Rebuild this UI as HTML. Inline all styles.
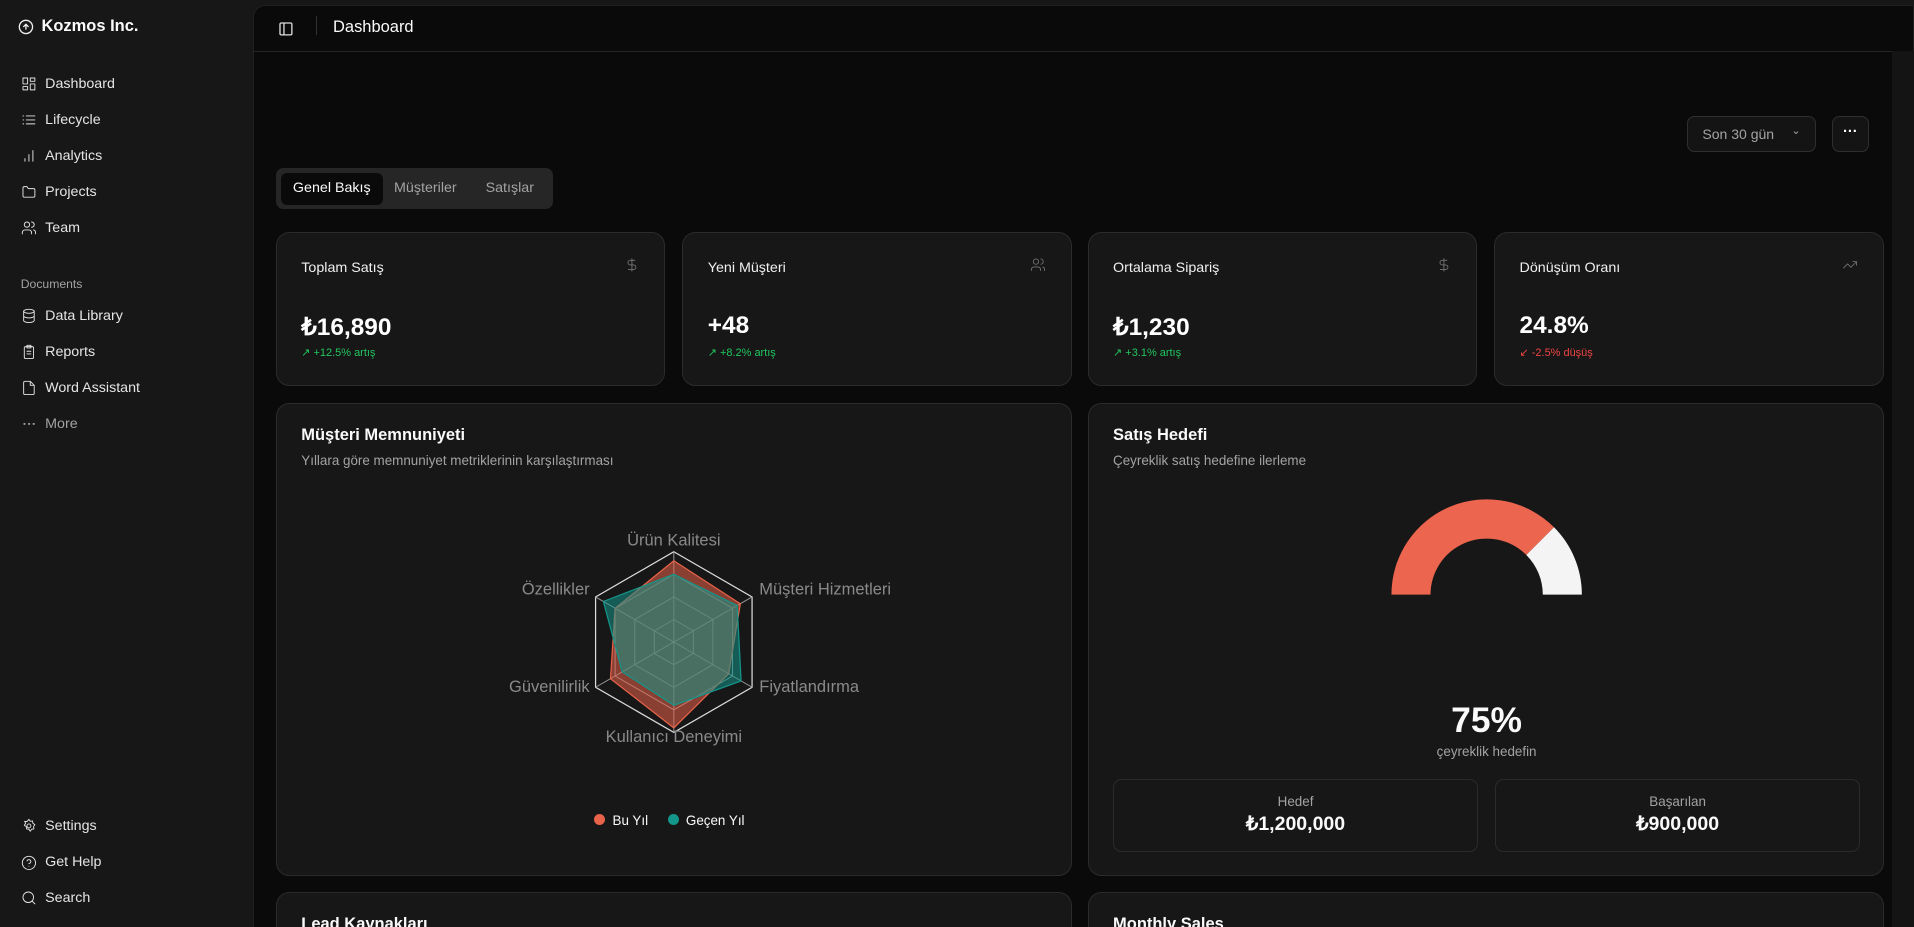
<!DOCTYPE html>
<html style="background:#171717;overflow:hidden"><head><meta charset="utf-8"><style>
html{zoom:1.2207}
*{box-sizing:border-box;margin:0;padding:0}
body{width:1568px;height:759px;overflow:hidden;background:#171717;font-family:"Liberation Sans",sans-serif;color:#fafafa;position:relative}
.a{position:absolute}
.nav{position:absolute;left:17px;font-size:11.7px;color:#e5e5e5;display:flex;align-items:center;gap:7px}
.nav svg{width:13px;height:13px;stroke:#e5e5e5;fill:none;stroke-width:1.4;stroke-linecap:round;stroke-linejoin:round}
.main{position:absolute;left:207px;top:4px;width:1361px;height:755px;background:#0a0a0a;border-top-left-radius:10px;border:1px solid #202020;border-bottom:none}
.card{position:absolute;background:#171717;border:1px solid #2b2b2b;border-radius:11px}
.t{font-size:11.7px;color:#f0f0f0}
.v{font-size:20px;font-weight:bold;color:#fff}
.s{font-size:9px}
.ic{position:absolute;right:20px;top:20px;width:13px;height:13px;stroke:#777;fill:none;stroke-width:1.3}
</style></head><body>
<div class="a" style="left:15px;top:14px;display:flex;align-items:center;gap:6px;font-size:13.5px;font-weight:bold">
<svg width="13" height="13" viewBox="0 0 24 24" fill="none" stroke="#eee" stroke-width="2"><circle cx="12" cy="12" r="10"/><path d="M12 16V8M8 12l4-4 4 4"/></svg>Kozmos Inc.</div>
<div class="nav" style="top:62px"><svg viewBox="0 0 24 24"><rect x="3" y="3" width="7" height="9"/><rect x="14" y="3" width="7" height="5"/><rect x="14" y="12" width="7" height="9"/><rect x="3" y="16" width="7" height="5"/></svg>Dashboard</div>
<div class="nav" style="top:92px"><svg viewBox="0 0 24 24"><path d="M8 6h13M8 12h13M8 18h13M3 6h1M3 12h1M3 18h1"/></svg>Lifecycle</div>
<div class="nav" style="top:121px"><svg viewBox="0 0 24 24"><path d="M6 20v-4M12 20V10M18 20V4"/></svg>Analytics</div>
<div class="nav" style="top:151px"><svg viewBox="0 0 24 24"><path d="M3 6a2 2 0 012-2h4l2 3h8a2 2 0 012 2v9a2 2 0 01-2 2H5a2 2 0 01-2-2z"/></svg>Projects</div>
<div class="nav" style="top:180px"><svg viewBox="0 0 24 24"><circle cx="9" cy="7" r="4"/><path d="M2 21v-2a4 4 0 014-4h6a4 4 0 014 4v2M16 3a4 4 0 010 8M22 21v-2a4 4 0 00-3-3.9"/></svg>Team</div>
<div class="a" style="left:17px;top:227px;font-size:10px;color:#a3a3a3">Documents</div>
<div class="nav" style="top:252px"><svg viewBox="0 0 24 24"><ellipse cx="12" cy="5" rx="8" ry="3"/><path d="M4 5v14c0 1.7 3.6 3 8 3s8-1.3 8-3V5M4 12c0 1.7 3.6 3 8 3s8-1.3 8-3"/></svg>Data Library</div>
<div class="nav" style="top:282px"><svg viewBox="0 0 24 24"><rect x="5" y="4" width="14" height="18" rx="2"/><path d="M9 2h6v4H9zM9 11h6M9 15h6"/></svg>Reports</div>
<div class="nav" style="top:311px"><svg viewBox="0 0 24 24"><path d="M14 2H6a2 2 0 00-2 2v16a2 2 0 002 2h12a2 2 0 002-2V8z M14 2v6h6"/></svg>Word Assistant</div>
<div class="nav" style="top:341px;color:#a3a3a3"><svg viewBox="0 0 24 24" style="stroke:#a3a3a3"><path d="M5 12h.5M12 12h.5M19 12h.5" stroke-width="3"/></svg>More</div>
<div class="nav" style="top:670px"><svg viewBox="0 0 24 24"><circle cx="12" cy="12" r="3"/><path d="M12 2l2 3 3.5-.5.5 3.5 3 2-2 3 .5 3.5-3.5.5-2 3-2-3-3.5-.5-.5-3.5-3-2 2-3L5.5 5 9 5.5z"/></svg>Settings</div>
<div class="nav" style="top:700px"><svg viewBox="0 0 24 24"><circle cx="12" cy="12" r="10"/><path d="M9.1 9a3 3 0 015.8 1c0 2-3 3-3 3M12 17h.01"/></svg>Get Help</div>
<div class="nav" style="top:729px"><svg viewBox="0 0 24 24"><circle cx="11" cy="11" r="8"/><path d="M21 21l-4.3-4.3"/></svg>Search</div>

<div class="main">
<svg class="a" style="left:20px;top:12px" width="13" height="13" viewBox="0 0 24 24" fill="none" stroke="#ddd" stroke-width="2"><rect x="3" y="3" width="18" height="18" rx="2"/><path d="M9 3v18"/></svg>
<div class="a" style="left:51px;top:8px;width:1px;height:16px;background:#333"></div>
<div class="a" style="left:65px;top:10px;font-size:13.5px">Dashboard</div>
<div class="a" style="left:0;top:37px;width:1361px;height:1px;background:#262626"></div>
<div class="a" style="left:1174px;top:90px;width:106px;height:30px;border:1px solid #2f2f2f;border-radius:6px;background:#141414;font-size:11.5px;color:#a3a3a3;padding:8px 0 0 12px">Son 30 gün <span style="position:absolute;right:12px;top:6px;font-size:9px">&#8964;</span></div>
<div class="a" style="left:1293px;top:90px;width:30px;height:30px;border:1px solid #2f2f2f;border-radius:6px;background:#141414;color:#fff;text-align:center;font-size:12px;font-weight:bold;line-height:26px">···</div>
<div class="a" style="left:18px;top:133px;width:227px;height:33px;background:#262626;border-radius:6px"></div>
<div class="a" style="left:22px;top:137px;width:84px;height:26px;background:#0a0a0a;border-radius:5px;font-size:11.7px;text-align:center;line-height:26px">Genel Bakış</div>
<div class="a" style="left:115px;top:143px;font-size:11.7px;color:#a3a3a3">Müşteriler</div>
<div class="a" style="left:190px;top:143px;font-size:11.7px;color:#a3a3a3">Satışlar</div>
</div>

<div class="card" style="left:226px;top:190px;width:319px;height:126px"><div class="a t" style="left:20px;top:22px">Toplam Satış</div><svg class="ic" viewBox="0 0 24 24"><path d="M12 2v20M17 5H9.5a3.5 3.5 0 000 7h5a3.5 3.5 0 010 7H6"/></svg><div class="a v" style="left:20px;top:65px">₺16,890</div><div class="a s" style="left:20px;top:93px;color:#22c55e">↗ +12.5% artış</div></div>
<div class="card" style="left:559px;top:190px;width:319px;height:126px"><div class="a t" style="left:20px;top:22px">Yeni Müşteri</div><svg class="ic" viewBox="0 0 24 24"><circle cx="9" cy="7" r="4"/><path d="M2 21v-2a4 4 0 014-4h6a4 4 0 014 4v2M16 3a4 4 0 010 8M22 21v-2a4 4 0 00-3-3.9"/></svg><div class="a v" style="left:20px;top:65px">+48</div><div class="a s" style="left:20px;top:93px;color:#22c55e">↗ +8.2% artış</div></div>
<div class="card" style="left:891px;top:190px;width:319px;height:126px"><div class="a t" style="left:20px;top:22px">Ortalama Sipariş</div><svg class="ic" viewBox="0 0 24 24"><path d="M12 2v20M17 5H9.5a3.5 3.5 0 000 7h5a3.5 3.5 0 010 7H6"/></svg><div class="a v" style="left:20px;top:65px">₺1,230</div><div class="a s" style="left:20px;top:93px;color:#22c55e">↗ +3.1% artış</div></div>
<div class="card" style="left:1224px;top:190px;width:319px;height:126px"><div class="a t" style="left:20px;top:22px">Dönüşüm Oranı</div><svg class="ic" viewBox="0 0 24 24"><path d="M22 7l-8.5 8.5-5-5L2 17M16 7h6v6"/></svg><div class="a v" style="left:20px;top:65px">24.8%</div><div class="a s" style="left:20px;top:93px;color:#ef4444">↙ -2.5% düşüş</div></div>

<div class="card" style="left:226px;top:330px;width:652px;height:388px">
<div class="a" style="left:20px;top:18px;font-size:13.5px;font-weight:bold">Müşteri Memnuniyeti</div>
<div class="a" style="left:20px;top:40px;font-size:11px;color:#a3a3a3">Yıllara göre memnuniyet metriklerinin karşılaştırması</div>
<div class="a" style="left:260px;top:335px;font-size:11px;display:flex;gap:16px;align-items:center"><span><span style="display:inline-block;width:9px;height:9px;border-radius:50%;background:#e8634a;margin-right:6px"></span>Bu Yıl</span><span><span style="display:inline-block;width:9px;height:9px;border-radius:50%;background:#14958a;margin-right:6px"></span>Geçen Yıl</span></div>
</div>
<svg class="a" style="left:0;top:0" width="1568" height="759" font-family="Liberation Sans, sans-serif" font-size="13.5" fill="#8a8a8a">
<g fill="none" stroke="#9a9a9a" stroke-width="0.8">
<polygon points="552,452 616.1,489 616.1,563 552,600 487.9,563 487.9,489" stroke="#ddd" stroke-width="1"/>
<polygon points="552,470.5 600.1,498.3 600.1,553.8 552,581.5 503.9,553.8 503.9,498.3"/>
<polygon points="552,489 584,507.5 584,544.5 552,563 520,544.5 520,507.5"/>
<polygon points="552,507.5 568,516.8 568,535.3 552,544.5 536,535.3 536,516.8"/>
<path d="M552,526L552,452M552,526L616.1,489M552,526L616.1,563M552,526L552,600M552,526L487.9,563M552,526L487.9,489"/>
</g>
<polygon points="552,459.4 606.5,494.6 596.9,551.9 552,596.3 500.1,556 503.9,498.3" fill="#e8634a" fill-opacity="0.55" stroke="#e8634a" stroke-width="1"/>
<polygon points="552,470.5 603.9,496 607.1,557.8 552,577.8 509.7,550.4 494.3,492.7" fill="#14958a" fill-opacity="0.55" stroke="#14958a" stroke-width="1"/>
<text x="552" y="447" text-anchor="middle">Ürün Kalitesi</text>
<text x="622" y="487">Müşteri Hizmetleri</text>
<text x="622" y="567">Fiyatlandırma</text>
<text x="552" y="608" text-anchor="middle">Kullanıcı Deneyimi</text>
<text x="483" y="567" text-anchor="end">Güvenilirlik</text>
<text x="483" y="487" text-anchor="end">Özellikler</text>
</svg>

<div class="card" style="left:891px;top:330px;width:652px;height:388px">
<div class="a" style="left:20px;top:18px;font-size:13.5px;font-weight:bold">Satış Hedefi</div>
<div class="a" style="left:20px;top:40px;font-size:11px;color:#a3a3a3">Çeyreklik satış hedefine ilerleme</div>
<svg class="a" style="left:246px;top:76px" width="160" height="82" viewBox="0 0 160 82">
<path d="M2,80 A78,78 0 0 1 135.2,24.8 L112.5,47.5 A46,46 0 0 0 34,80 Z" fill="#ec654e"/>
<path d="M135.2,24.8 A78,78 0 0 1 158,80 L126,80 A46,46 0 0 0 112.5,47.5 Z" fill="#f4f4f5"/>
</svg>
<div class="a" style="left:0;width:652px;text-align:center;top:243px;font-size:29px;font-weight:bold">75%</div>
<div class="a" style="left:0;width:652px;text-align:center;top:279px;font-size:11px;color:#a3a3a3">çeyreklik hedefin</div>
<div class="a" style="left:20px;top:307px;width:299px;height:60px;border:1px solid #2b2b2b;border-radius:7px;text-align:center"><div style="font-size:11px;color:#a3a3a3;margin-top:12px">Hedef</div><div style="font-size:16px;font-weight:bold;margin-top:2px">₺1,200,000</div></div>
<div class="a" style="left:333px;top:307px;width:299px;height:60px;border:1px solid #2b2b2b;border-radius:7px;text-align:center"><div style="font-size:11px;color:#a3a3a3;margin-top:12px">Başarılan</div><div style="font-size:16px;font-weight:bold;margin-top:2px">₺900,000</div></div>
</div>

<div class="card" style="left:226px;top:731px;width:652px;height:40px;border-bottom:none;border-bottom-left-radius:0;border-bottom-right-radius:0"><div class="a" style="left:20px;top:18px;font-size:13.5px;font-weight:bold">Lead Kaynakları</div></div>
<div class="card" style="left:891px;top:731px;width:652px;height:40px;border-bottom:none;border-bottom-left-radius:0;border-bottom-right-radius:0"><div class="a" style="left:20px;top:18px;font-size:13.5px;font-weight:bold">Monthly Sales</div></div>
<div class="a" style="left:1550px;top:42px;width:18px;height:717px;background:#141414"></div>
</body></html>
